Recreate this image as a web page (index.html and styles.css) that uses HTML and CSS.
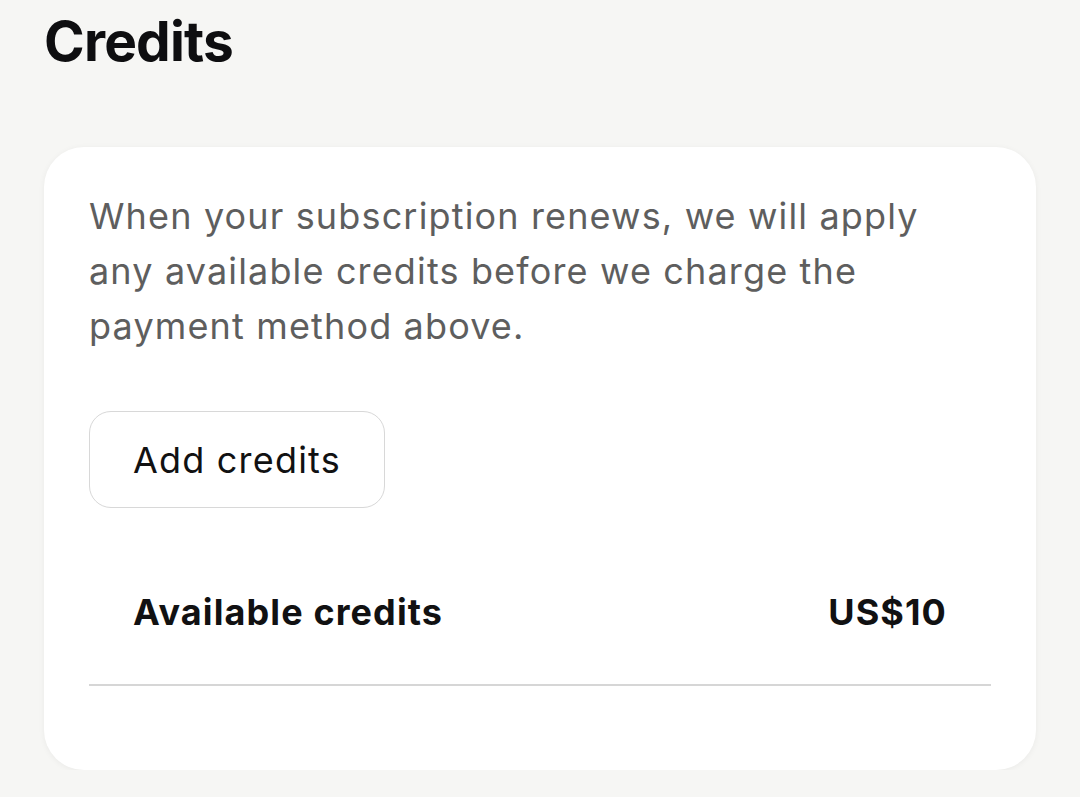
FILE: index.html
```html
<!DOCTYPE html>
<html lang="en">
<head>
<meta charset="utf-8">
<title>Credits</title>
<link rel="stylesheet" href="styles.css">
</head>
<body>
<main class="page">
  <h1 class="title">Credits</h1>
  <section class="card">
    <p class="desc">When your subscription renews, we will apply any available credits before we charge the payment method above.</p>
    <button class="btn" type="button">Add credits</button>
    <div class="row">
      <span class="row-label">Available credits</span>
      <span class="row-value">US$10</span>
    </div>
    <hr class="divider">
  </section>
</main>
</body>
</html>
```
FILE: styles.css
```css
html, body {
  margin: 0;
  padding: 0;
  background: #f6f6f4;
}
body {
  font-family: Inter, "Noto Sans", "Liberation Sans", sans-serif;
  color: #111112;
}
.page {
  padding: 8px 44px 0 44px;
}
.title {
  margin: 0;
  font-size: 55px;
  line-height: 66px;
  font-weight: 700;
  letter-spacing: -0.8px;
  color: #0e0e10;
}
.card {
  margin-top: 73px;
  width: 992px;
  box-sizing: border-box;
  background: #ffffff;
  border-radius: 40px;
  box-shadow: 0 1px 6px rgba(0, 0, 0, 0.05);
  padding: 42px 45px 84px 45px;
}
.desc {
  margin: 0;
  font-size: 36px;
  line-height: 55px;
  letter-spacing: 1.15px;
  color: #5e5e5e;
}
.btn {
  margin-top: 57px;
  display: block;
  height: 97px;
  padding: 0 43px;
  box-sizing: border-box;
  background: #ffffff;
  border: 1.5px solid #d8d8d8;
  border-radius: 22px;
  font-family: inherit;
  font-size: 36px;
  letter-spacing: 1.2px;
  color: #111112;
}
.row {
  margin-top: 77px;
  padding: 0 44px 0 44px;
  display: flex;
  justify-content: space-between;
  align-items: center;
  font-size: 36px;
  line-height: 54px;
  font-weight: 700;
  letter-spacing: 1.1px;
}
.divider {
  margin: 45px 0 0 0;
  border: 0;
  height: 2px;
  background: #d6d6d6;
}
```
